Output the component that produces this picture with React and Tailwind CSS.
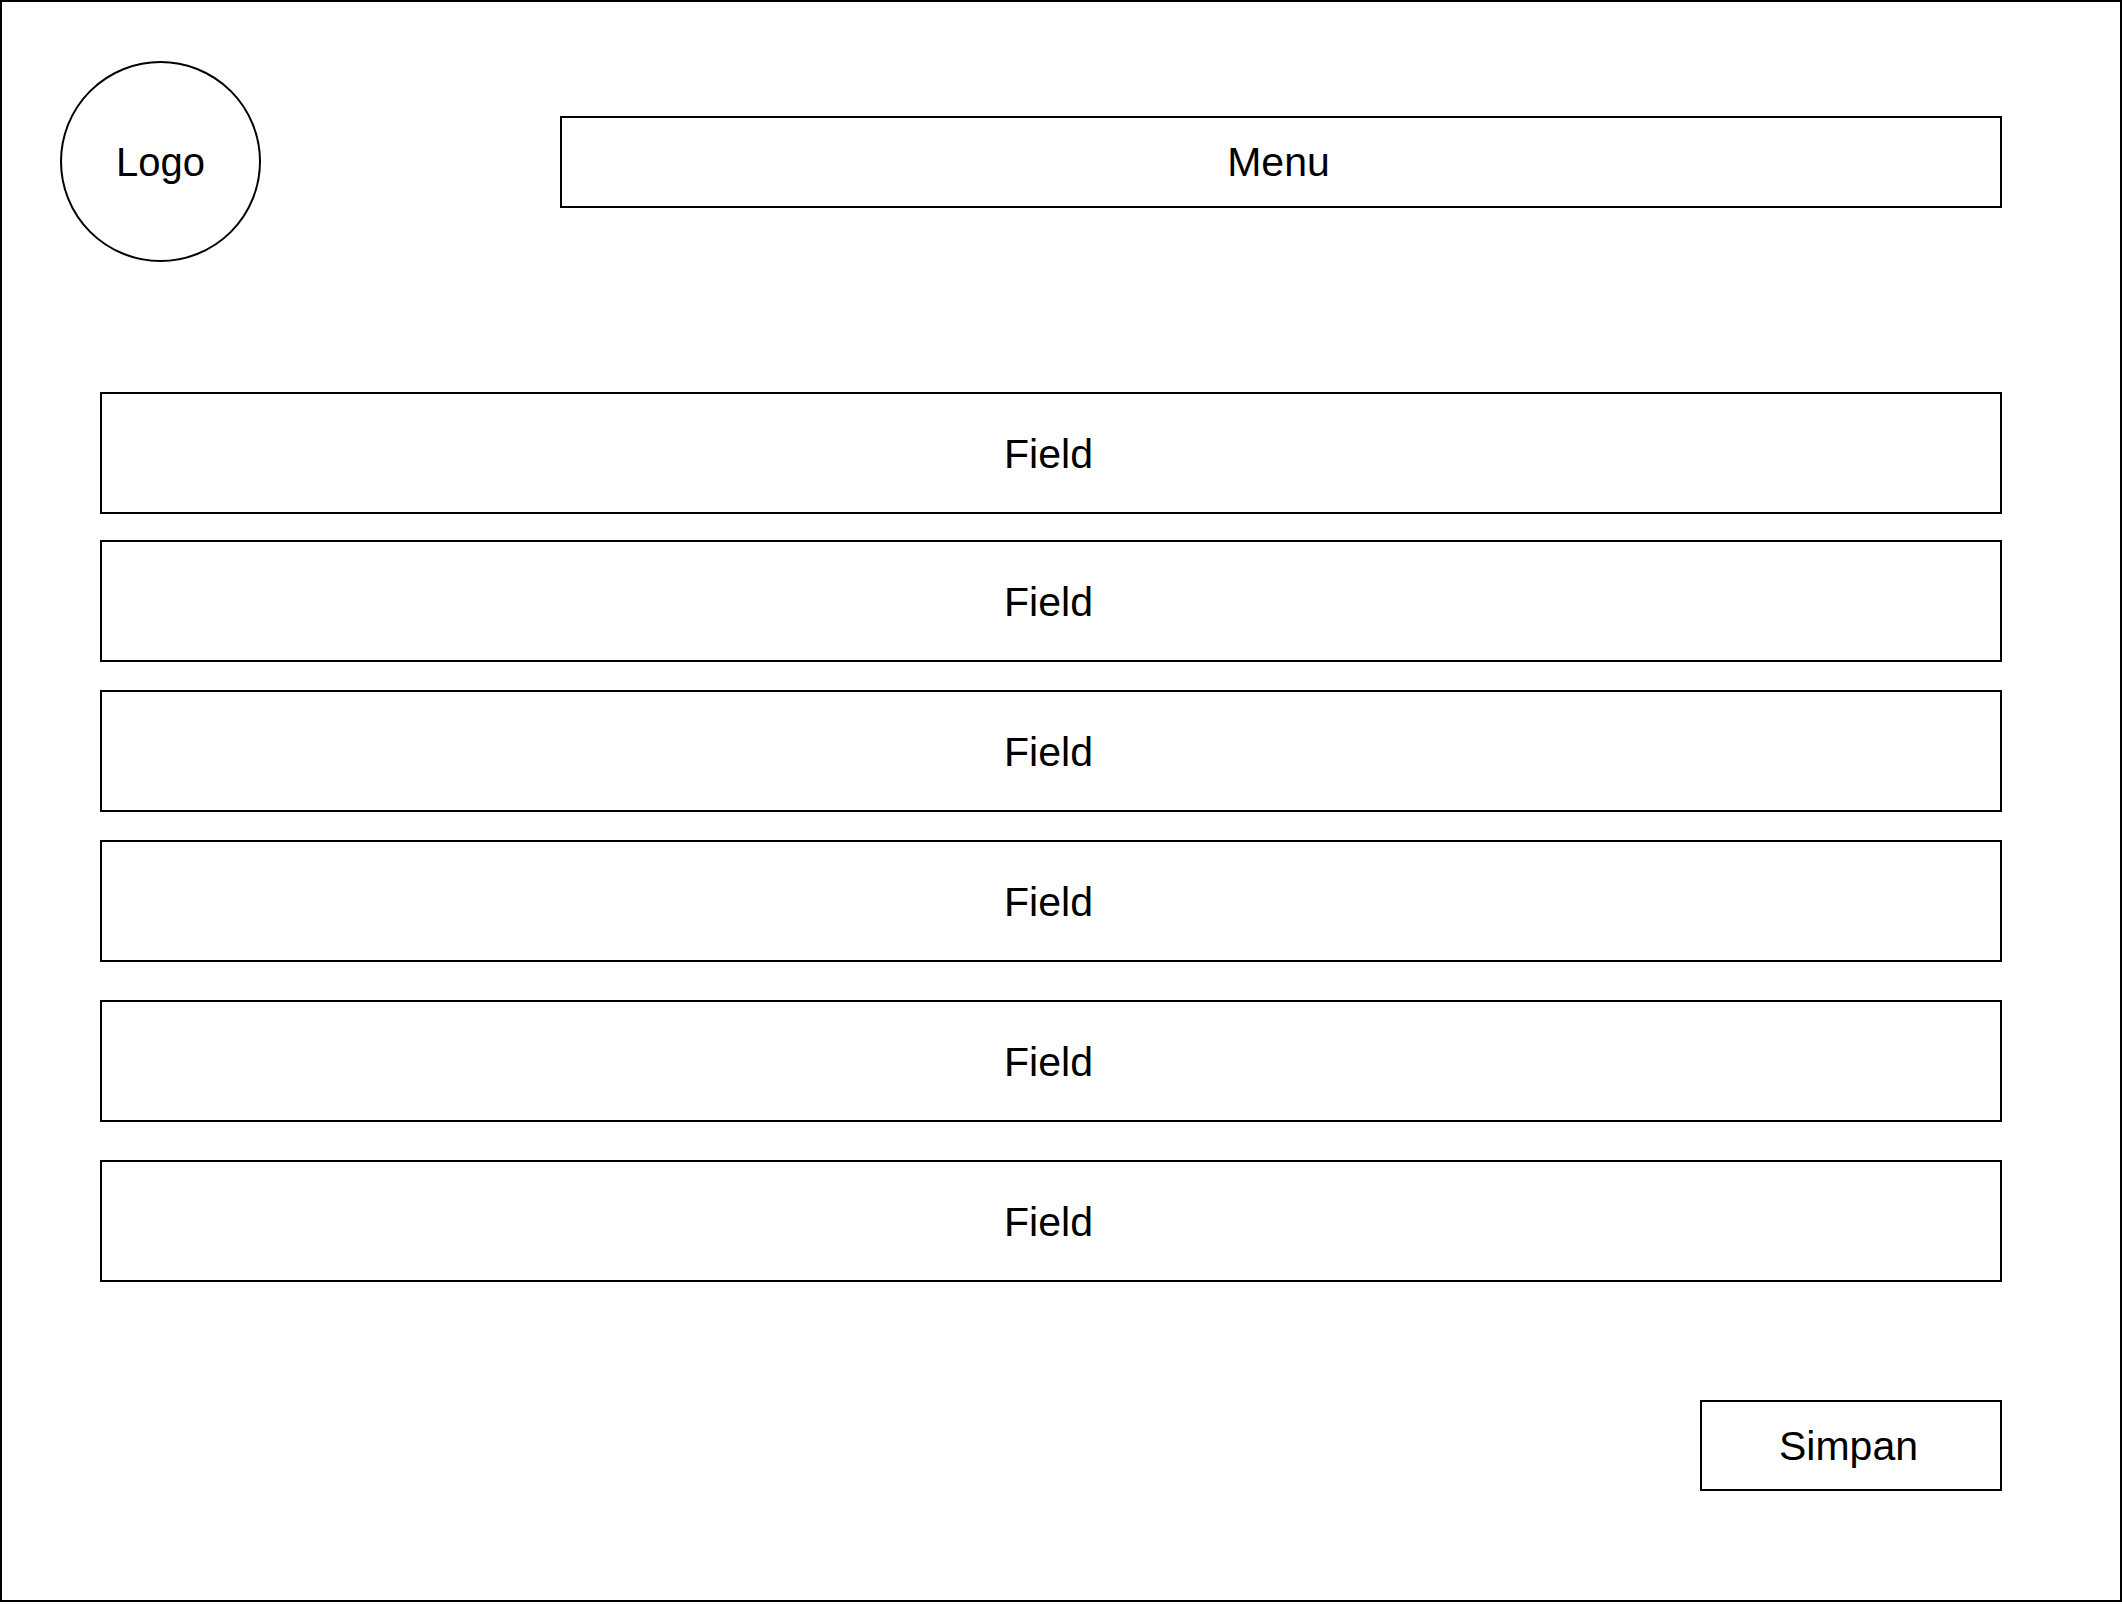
import React from 'react';

const fields = [
  { label: 'Field', gap: 'mt-0' },
  { label: 'Field', gap: 'mt-[26px]' },
  { label: 'Field', gap: 'mt-[28px]' },
  { label: 'Field', gap: 'mt-[28px]' },
  { label: 'Field', gap: 'mt-[38px]' },
  { label: 'Field', gap: 'mt-[38px]' },
];

const Box = ({ children, className = '' }) => (
  <div className={`flex items-center justify-center border-2 border-black bg-white pr-[5px] pt-[2px] text-[41px] text-black ${className}`}>
    {children}
  </div>
);

export default function App() {
  return (
    <div className="w-[2122px] h-[1602px] bg-white border-2 border-black flex flex-col font-['Liberation_Sans',Arial,sans-serif] leading-none">
      {/* header */}
      <div className="flex items-center pl-[58px] pr-[118px] pt-[59px]">
        <div className="w-[201px] h-[201px] rounded-full border-2 border-black flex items-center justify-center text-[40px]">
          Logo
        </div>
        <Box className="ml-auto w-[1442px] h-[92px]">Menu</Box>
      </div>

      {/* form */}
      <div className="flex flex-col ml-[98px] mr-[118px] mt-[130px]">
        {fields.map((f, i) => (
          <Box key={i} className={`h-[122px] ${f.gap}`}>{f.label}</Box>
        ))}
        <Box className="self-end mt-[118px] w-[302px] h-[91px]">Simpan</Box>
      </div>
    </div>
  );
}
